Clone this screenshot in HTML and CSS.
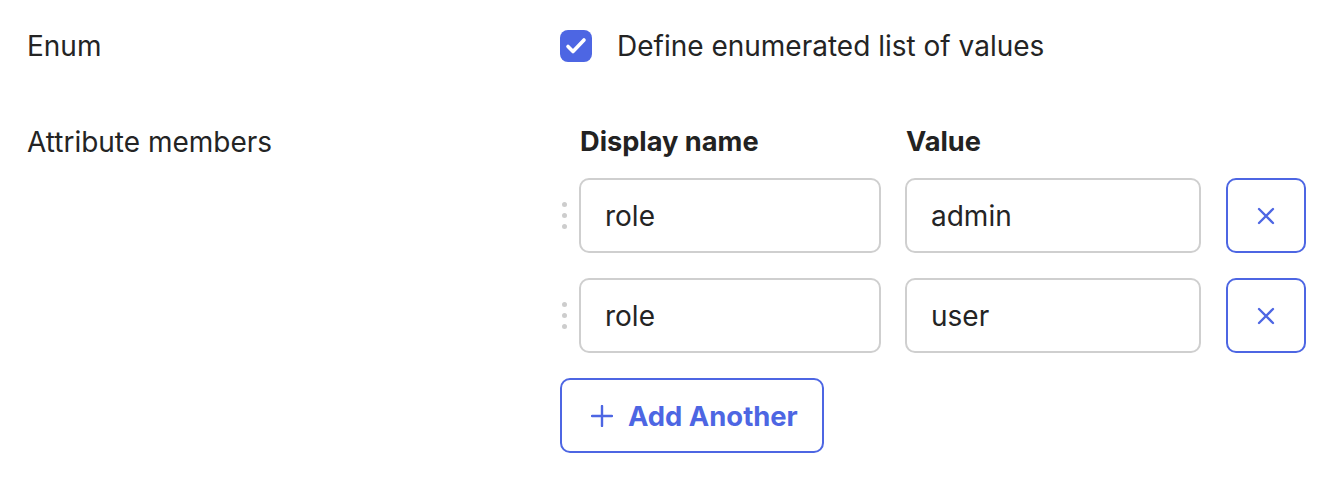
FILE: index.html
```html
<!DOCTYPE html>
<html lang="en">
<head>
<meta charset="utf-8">
<title>Attribute</title>
<link rel="stylesheet" href="styles.css">
</head>
<body>
<div class="form">
  <div class="field field-enum">
    <div class="label">Enum</div>
    <label class="check">
      <span class="checkbox">
        <svg width="26" height="26" viewBox="0 0 26 26"><path d="M5 13.5l5 5 11-11.5" fill="none" stroke="#fff" stroke-width="3.6" stroke-linecap="round" stroke-linejoin="round"/></svg>
      </span>
      <span class="check-text">Define enumerated list of values</span>
    </label>
  </div>
  <div class="field field-members">
    <div class="label">Attribute members</div>
    <div class="members">
      <div class="member-head">
        <span></span>
        <span class="col-title">Display name</span>
        <span class="col-title">Value</span>
        <span></span>
      </div>
      <div class="member-row">
        <span class="handle"><i></i><i></i><i></i></span>
        <input class="input input-name" type="text" value="role">
        <input class="input input-value" type="text" value="admin">
        <button class="remove" type="button" aria-label="Remove">
          <svg width="20" height="20" viewBox="0 0 20 20"><path d="M3 3l14 14M17 3L3 17" fill="none" stroke="currentColor" stroke-width="2.3" stroke-linecap="round"/></svg>
        </button>
      </div>
      <div class="member-row">
        <span class="handle"><i></i><i></i><i></i></span>
        <input class="input input-name" type="text" value="role">
        <input class="input input-value" type="text" value="user">
        <button class="remove" type="button" aria-label="Remove">
          <svg width="20" height="20" viewBox="0 0 20 20"><path d="M3 3l14 14M17 3L3 17" fill="none" stroke="currentColor" stroke-width="2.3" stroke-linecap="round"/></svg>
        </button>
      </div>
      <button class="add" type="button">
        <svg width="22" height="22" viewBox="0 0 22 22"><path d="M11 1v20M1 11h20" fill="none" stroke="currentColor" stroke-width="2.4" stroke-linecap="round"/></svg>
        <span>Add Another</span>
      </button>
    </div>
  </div>
</div>
</body>
</html>
```

FILE: styles.css
```css
* { box-sizing: border-box; }

body {
  margin: 0;
  background: #fff;
  font-family: Inter, "Noto Sans", sans-serif;
  font-size: 28px;
  color: #242424;
}

.form {
  padding: 30px 30px 0 27px;
  display: flex;
  flex-direction: column;
  gap: 64px;
}

.field {
  display: grid;
  grid-template-columns: 533px 1fr;
  align-items: start;
}

.label {
  line-height: 32px;
}

.check {
  display: flex;
  align-items: center;
  gap: 25px;
}

.checkbox {
  width: 32px;
  height: 32px;
  border-radius: 8px;
  background: #4d66e3;
  display: flex;
  align-items: center;
  justify-content: center;
}

.check-text {
  line-height: 32px;
}

.members {
  display: flex;
  flex-direction: column;
  gap: 25px;
}

.member-head {
  display: grid;
  grid-template-columns: 20px 326px 320px 80px;
  margin-bottom: -5px;
}

.col-title {
  font-weight: 700;
  font-size: 27.2px;
  line-height: 32px;
  color: #222;
}

.member-row {
  display: grid;
  grid-template-columns: 19px 302px 296px 80px;
  column-gap: 0;
  align-items: center;
}

.input-value { margin-left: 24px; }
.remove { margin-left: 49px; }

.handle {
  display: flex;
  flex-direction: column;
  align-items: flex-start;
  gap: 6px;
  padding-left: 2px;
}

.handle i {
  width: 5px;
  height: 5px;
  border-radius: 50%;
  background: #cdcdcd;
}

.input {
  height: 75px;
  border: 2px solid #cfcfcf;
  border-radius: 10px;
  padding: 0 24px;
  font: inherit;
  color: #242424;
  background: #fff;
  outline: none;
  min-width: 0;
}

.input-name { width: 302px; }
.input-value { width: 296px; }

.remove {
  width: 80px;
  height: 75px;
  border: 2px solid #4d66e3;
  border-radius: 10px;
  background: #fff;
  color: #4d66e3;
  display: flex;
  align-items: center;
  justify-content: center;
  padding: 0;
}

.add {
  align-self: flex-start;
  width: 264px;
  height: 75px;
  border: 2px solid #4d66e3;
  border-radius: 10px;
  background: #fff;
  color: #4d66e3;
  font: inherit;
  font-weight: 700;
  font-size: 27.4px;
  display: flex;
  align-items: center;
  gap: 15px;
  padding: 0 0 0 29px;
}
```
